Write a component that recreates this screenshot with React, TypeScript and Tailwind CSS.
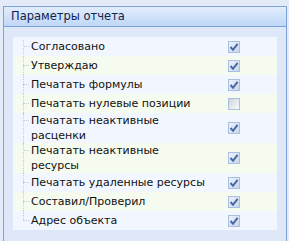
import React from 'react'

type Item = { lines: string[]; checked: boolean }

const items: Item[] = [
  { lines: ['Согласовано'], checked: true },
  { lines: ['Утверждаю'], checked: true },
  { lines: ['Печатать формулы'], checked: true },
  { lines: ['Печатать нулевые позиции'], checked: false },
  { lines: ['Печатать неактивные', 'расценки'], checked: true },
  { lines: ['Печатать неактивные', 'ресурсы'], checked: true },
  { lines: ['Печатать удаленные ресурсы'], checked: true },
  { lines: ['Составил/Проверил'], checked: true },
  { lines: ['Адрес объекта'], checked: true },
]

function Checkbox({ checked }: { checked: boolean }) {
  return (
    <div
      className={`w-[12px] h-[12px] border border-[#a9c0e2] flex items-center justify-center ${
        checked
          ? 'bg-gradient-to-br from-[#eef3fb] to-[#c9d6ea]'
          : 'bg-gradient-to-br from-[#cfd3d9] to-[#fbfbfc]'
      }`}
    >
      {checked && (
        <svg width="10" height="10" viewBox="0 0 10 10">
          <path d="M1.5 5 L4 7.8 L8.6 1.8" fill="none" stroke="#4467a3" strokeWidth="1.9" />
        </svg>
      )}
    </div>
  )
}

export default function App() {
  return (
    <div
      className="w-[289px] h-[241px] bg-[#e3ebf8] pt-[6px] pl-[3px] pr-[2px] overflow-hidden"
      style={{ fontFamily: '"DejaVu Sans", Tahoma, sans-serif' }}
    >
      <div className="h-full border-l border-t border-r border-[#7ea3d6] bg-[#dfe8f8] flex flex-col">
        {/* Header */}
        <div className="h-[20px] border-b border-[#7ea3d6] bg-gradient-to-b from-[#e2edfc] to-[#bfd7f7] flex items-center pl-[7px] text-[11.5px] text-[#0f2450]">
          Параметры отчета
        </div>

        {/* Body */}
        <div className="pt-[10px] px-[9px]">
          <div className="flex flex-col">
            {items.map((item, i) => {
              const tall = item.lines.length > 1
              const last = i === items.length - 1
              return (
                <div
                  key={i}
                  className={`flex ${tall ? 'h-[30px]' : 'h-[19px]'} ${
                    i % 2 === 0 ? 'bg-[#f2f7ff]' : 'bg-[#f5fbee]'
                  }`}
                >
                  {/* Tree lines */}
                  <div className="relative w-[18px] shrink-0">
                    <div
                      className={`absolute left-[10px] top-0 border-l border-dotted border-[#c3cad6] ${
                        last ? 'h-[9px]' : 'h-full'
                      } ${i === 0 ? 'top-[3px]' : ''}`}
                    />
                    <div className={`absolute left-[10px] w-[6px] border-t border-dotted border-[#c3cad6] ${tall ? 'top-[7px]' : 'top-[9px]'}`} />
                  </div>
                  <div className="flex-1 flex flex-col justify-center text-[11px] leading-[15px] text-[#111]">
                    {item.lines.map((l, j) => (
                      <span key={j}>{l}</span>
                    ))}
                  </div>
                  <div className="w-[49px] shrink-0 flex items-center">
                    <Checkbox checked={item.checked} />
                  </div>
                </div>
              )
            })}
          </div>
        </div>
      </div>
    </div>
  )
}
